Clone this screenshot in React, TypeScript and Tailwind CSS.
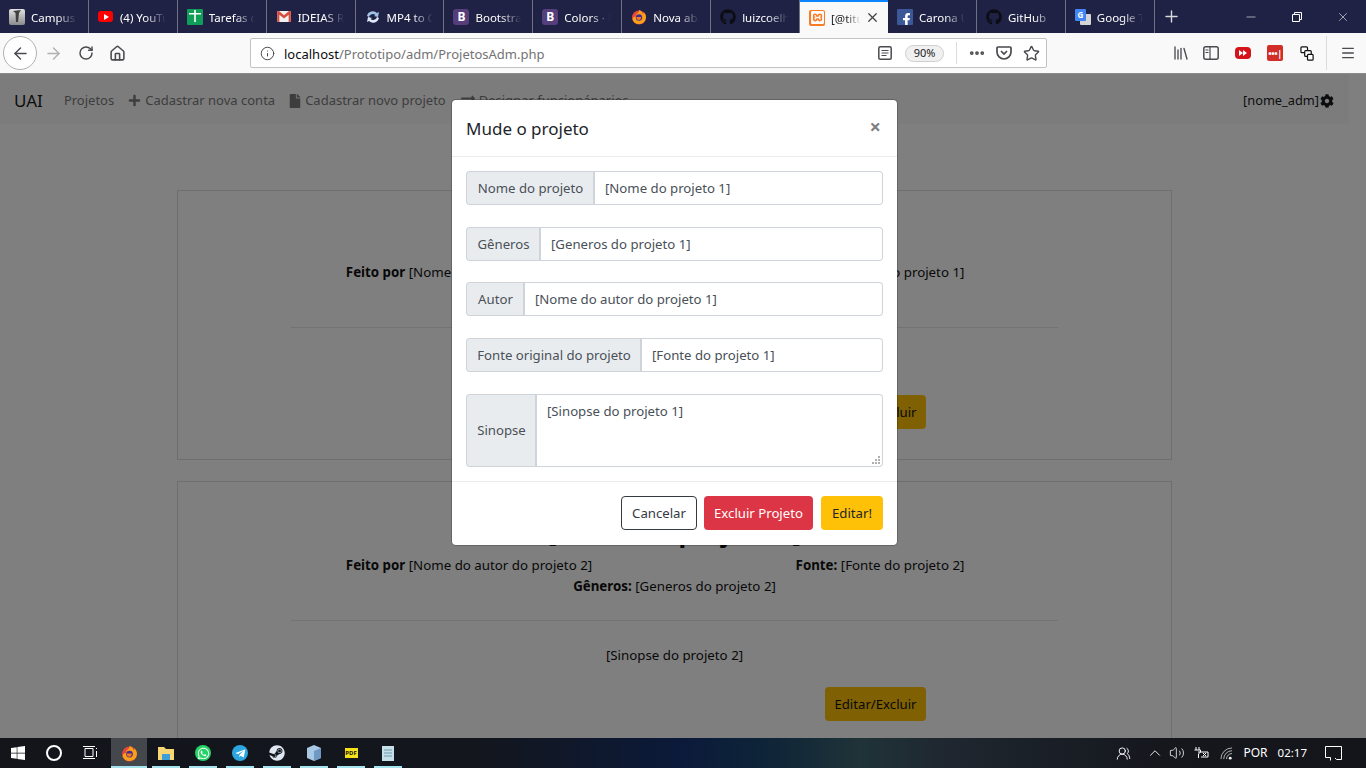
import type { ReactNode } from "react"
import { FaPlus, FaFile, FaExchangeAlt, FaCog, FaGithub, FaWindows, FaSteam, FaWhatsapp, FaTelegramPlane, FaFacebookF } from "react-icons/fa"
import { SiXampp } from "react-icons/si"
import { ArrowLeft, ArrowRight, RotateCw, Home, Info, Ellipsis, Star, Plus, X, Minus, Menu, ChevronUp, Volume2, Library, UsersRound } from "lucide-react"

const font = "font-['Noto_Sans','Open_Sans',sans-serif]"

function Firefox({ size = 16 }: { size?: number }) {
  return (
    <svg width={size} height={size} viewBox="0 0 16 16">
      <circle cx="8" cy="8.5" r="7" fill="#e8463a" />
      <path d="M1.500 10.500A7 7 0 0 0 15 8.500c0-2-.8-4-2.400-5.400.3 1-.1 1.700-.6 2.100C11.500 3 9.800 1.500 8 1c.3 1.500-.6 2.500-1.500 3.200C5 5 4.500 6 5 7.500 3.500 7.500 2 8 1.500 10.500z" fill="#f9a01b" />
      <circle cx="8" cy="8.500" r="3.200" fill="#4a2a8c" />
      <path d="M5.500 8h4.500c.5 1.500-.5 3-2.200 3S5 9.500 5.500 8z" fill="#f47a20" />
    </svg>
  )
}

function TabIcon({ kind }: { kind: string }) {
  if (kind === "campus") return <span className="w-4 h-4 rounded-[2px] bg-gradient-to-b from-[#e2e2e2] to-[#8b8b8b] flex items-start justify-center"><svg width="10" height="13" viewBox="0 0 10 13"><path d="M1 2l8-1-2 3-1 9H4L3.500 4z" fill="#3f3f3f" /></svg></span>
  if (kind === "youtube") return <span className="w-[15px] h-[11px] rounded-[3px] bg-[#f00] flex items-center justify-center"><svg width="6" height="6" viewBox="0 0 6 6"><path d="M1 0l5 3-5 3z" fill="#fff" /></svg></span>
  if (kind === "tasks") return <span className="w-4 h-4 rounded-[1px] bg-[#0f9d58] flex items-center justify-center"><svg width="12" height="14" viewBox="0 0 12 14"><path d="M0 3h12v1.500H0zM5.200 0h1.600v12H5.200z" fill="#fff" /></svg></span>
  if (kind === "gmail") return <svg width="14" height="11" viewBox="0 0 16 13"><rect width="16" height="13" fill="#f1f1f1" /><path d="M0 0h2l6 5 6-5h2v13h-2.500V4.500L8 9 2.500 4.500V13H0z" fill="#d54c3f" /></svg>
  if (kind === "mp4") return <svg width="16" height="16" viewBox="0 0 16 16" fill="none"><path d="M2 7a6 6 0 0 1 10-3l2-1-1 5-4-1 1.500-1A4 4 0 0 0 4 8z" fill="#9fc3e8" /><path d="M14 9a6 6 0 0 1-10 3l-2 1 1-5 4 1-1.500 1A4 4 0 0 0 12 8z" fill="#dbe8f5" /></svg>
  if (kind === "bootstrap") return <span className={`w-4 h-4 rounded-[3px] bg-[#563d7c] text-white flex items-center justify-center text-[12px] font-bold ${font}`}>B</span>
  if (kind === "firefox") return <Firefox />
  if (kind === "github") return <FaGithub className="text-[#0c0d14]" size={16} />
  if (kind === "xampp") return <span className="w-4 h-4 rounded-[2px] bg-[#fb7a24] flex items-center justify-center"><SiXampp className="text-white" size={13} /></span>
  if (kind === "facebook") return <span className="w-4 h-4 rounded-[1px] bg-[#3b5998] flex items-end justify-end overflow-hidden"><FaFacebookF className="text-white -mb-[1px]" size={13} /></span>
  return (
    <span className="relative w-4 h-4">
      <span className="absolute right-0 bottom-0 w-[11px] h-[11px] bg-[#d5d5d5] rounded-[1px]"></span>
      <span className={`absolute left-0 top-0 w-[11px] h-[12px] bg-[#4285f4] rounded-[1px] text-white text-[8px] leading-[12px] text-center font-bold ${font}`}>G</span>
    </span>
  )
}

const tabs = [
  { kind: "campus", label: "Campus" },
  { kind: "youtube", label: "(4) YouTube" },
  { kind: "tasks", label: "Tarefas do" },
  { kind: "gmail", label: "IDEIAS RA" },
  { kind: "mp4", label: "MP4 to GIF" },
  { kind: "bootstrap", label: "Bootstrap" },
  { kind: "bootstrap", label: "Colors · Bo" },
  { kind: "firefox", label: "Nova aba" },
  { kind: "github", label: "luizcoelho" },
  { kind: "xampp", label: "[@titulo]", active: true },
  { kind: "facebook", label: "Carona Uai" },
  { kind: "github", label: "GitHub" },
  { kind: "translate", label: "Google Tra" },
]

function Tab({ kind, label, active }: { kind: string; label: string; active?: boolean }) {
  if (active) {
    return (
      <div className="w-[88px] h-[33px] bg-[#f9f9fa] border-t-2 border-[#0a84ff] flex items-center pl-[9px] shrink-0">
        <TabIcon kind={kind} />
        <span className="ml-[6px] pt-[2px] text-[11.500px] text-[#222] w-[30px] overflow-hidden whitespace-nowrap [mask-image:linear-gradient(to_right,black_50%,transparent)]">{label}</span>
        <X size={15} className="ml-[4px] text-[#444]" strokeWidth={2} />
      </div>
    )
  }
  return (
    <div className="w-[88.900px] h-[33px] flex items-center pl-[9px] border-r border-[#6f7184] shrink-0">
      <span className="w-4 flex justify-center shrink-0"><TabIcon kind={kind} /></span>
      <span className="ml-[6px] pt-[3px] text-[11.500px] text-white w-[46px] overflow-hidden whitespace-nowrap [mask-image:linear-gradient(to_right,black_55%,transparent)]">{label}</span>
    </div>
  )
}

function Card({ n, top, btn }: { n: number; top: string; btn: string }) {
  return (
    <div className="w-[995px] mx-auto border border-[#dcdcdc] shrink-0 px-[113px] h-[270px] flex flex-col items-center text-[13.300px] text-[#111]">
      <h4 className={`${top} mb-[8px] text-[25.500px] font-bold leading-[29px] whitespace-nowrap`}>[Nome do projeto {n}]</h4>
      <div className="w-[822px] grid grid-cols-2 text-center leading-[21px]">
        <p><b>Feito por</b> [Nome do autor do projeto {n}]</p>
        <p><b>Fonte:</b> [Fonte do projeto {n}]</p>
      </div>
      <p className="leading-[21px]"><b>Gêneros:</b> [Generos do projeto {n}]</p>
      <div className="w-full border-t border-[#e6e6e6] mt-[23px]"></div>
      <p className="mt-[24px] leading-[21px]">[Sinopse do projeto {n}]</p>
      <div className={`w-full flex justify-end pr-[132px] ${btn}`}><span className="w-[101px] h-[34px] pt-[2px] bg-[#ffc107] rounded-[4px] flex items-center justify-center text-[13.200px]">Editar/Excluir</span></div>
    </div>
  )
}

function Field({ label, value, labelW }: { label: string; value: string; labelW: string }) {
  return (
    <div className="flex h-[34px] text-[13.200px] text-[#495057]">
      <span className={`${labelW} bg-[#e9ecef] border border-r-0 border-[#ced4da] rounded-l-[4px] flex items-center justify-center pl-[1px] pt-[2px] whitespace-nowrap`}>{label}</span>
      <span className="flex-1 border-2 border-y-[1px] border-r-[1px] border-[#ced4da] rounded-r-[4px] flex items-center pl-[10px] pt-[2px] whitespace-nowrap">{value}</span>
    </div>
  )
}

export default function App() {
  return (
    <div className={`relative w-[1366px] h-[768px] overflow-hidden flex flex-col bg-white ${font}`}>
      {/* barra de abas */}
      <div className="h-[33px] bg-[#1f2245] flex shrink-0">
        {tabs.map((t, i) => <Tab key={i} {...t} />)}
        <div className="w-[34px] flex items-center justify-center"><Plus size={19} className="text-[#d7d8de]" strokeWidth={1.800} /></div>
        <div className="flex-1 flex justify-end text-white">
          <span className="w-[46px] flex items-center justify-center"><Minus size={14} strokeWidth={1} /></span>
          <span className="w-[46px] flex items-center justify-center">
            <svg width="10" height="10" viewBox="0 0 10 10" fill="none" stroke="#fff"><path d="M.5 2.500h7v7h-7zM2.500 2.500v-2h7v7h-2" /></svg>
          </span>
          <span className="w-[46px] flex items-center justify-center"><X size={14} strokeWidth={1} /></span>
        </div>
      </div>

      {/* toolbar */}
      <div className="h-[41px] bg-[#f9f9fa] border-b border-[#8c8c8c] flex items-center shrink-0 text-[#4a4a4f]">
        <div className="ml-[3px] w-[34px] h-[34px] rounded-full border border-[#b1b1b3] bg-white flex items-center justify-center"><ArrowLeft size={19} strokeWidth={1.800} /></div>
        <ArrowRight size={19} strokeWidth={1.800} className="ml-[7px] text-[#b1b1b3]" />
        <RotateCw size={16} strokeWidth={2.200} className="ml-[15px]" />
        <Home size={17} strokeWidth={2.200} className="ml-[15px]" />
        <div className="ml-[124px] w-[797px] h-[30px] bg-white border border-[#c2c2c4] rounded-[2px] flex items-center">
          <Info size={15} className="ml-[9px] shrink-0" strokeWidth={1.600} />
          <span className="ml-[9px] pt-[4px] text-[13px] whitespace-nowrap text-[#737373]"><span className="text-[#0c0c0d]">localhost</span>/Prototipo/adm/ProjetosAdm.php</span>
          <svg width="14" height="14" viewBox="0 0 14 14" fill="none" stroke="#4a4a4f" strokeWidth="1.500" className="ml-auto shrink-0"><rect x=".8" y=".8" width="12.400" height="12.400" rx="1.500" /><path d="M3.500 4.500h7M3.500 7h7M3.500 9.500h5" strokeWidth="1" /></svg>
          <span className="ml-[13px] w-[39px] h-[17px] rounded-full border border-[#cfcfd1] bg-[#f0f0f1] text-[11px] flex items-center justify-center shrink-0 text-[#222]">90%</span>
          <span className="ml-[12px] h-[22px] border-l border-[#dcdcde]"></span>
          <Ellipsis size={18} strokeWidth={3} className="ml-[11px] shrink-0" />
          <svg width="16" height="16" viewBox="0 0 16 16" fill="none" stroke="#4a4a4f" strokeWidth="1.700" className="ml-[10px] shrink-0"><path d="M2 2h12a1 1 0 0 1 1 1v4a7 7 0 0 1-14 0V3a1 1 0 0 1 1-1z" /><path d="M5 6l3 3 3-3" /></svg>
          <Star size={17} strokeWidth={2} className="ml-[11px] mr-[6px] shrink-0" />
        </div>
        <Library size={18} strokeWidth={1.800} className="ml-[125px]" />
        <svg width="16" height="14" viewBox="0 0 16 14" fill="none" stroke="#4a4a4f" strokeWidth="1.500" className="ml-[13px]"><rect x=".8" y=".8" width="14.400" height="12.400" rx="2" /><path d="M7 1v12M2.500 4h3M2.500 6.500h3" strokeWidth="1.200" /></svg>
        <span className="ml-[16px] w-4 h-[12px] rounded-[4px] bg-[#d4131b] flex items-center justify-center"><svg width="8" height="6" viewBox="0 0 8 6"><path d="M0 0l4 3-4 3zM4 0l4 3-4 3z" fill="#fff" /></svg></span>
        <span className="ml-[16px] w-4 h-4 rounded-[2px] bg-[#d32d27] flex items-center justify-center text-white text-[9px] leading-none font-bold tracking-tighter">•••|</span>
        <svg width="15" height="15" viewBox="0 0 16 16" fill="#fff" stroke="#111" strokeWidth="1.300" className="ml-[17px]"><rect x="1" y="1" width="7" height="6" rx="1" /><rect x="5" y="5" width="7" height="6" rx="1" /><rect x="8" y="9" width="6" height="6" rx="1" /></svg>
        <span className="ml-[11px] h-[34px] border-l border-[#dcdcde]"></span>
        <Menu size={16} strokeWidth={2} className="ml-[13px]" />
      </div>

      {/* pagina, a barra de rolagem fica de fora com o modal aberto */}
      <div className="flex-1 min-h-0 overflow-hidden w-[1349px] flex flex-col bg-white">
        <nav className="h-[50px] bg-[#f8f9fa] flex items-center pl-[14px] pr-[15px] shrink-0 text-[13px] text-[#7b7b7b]">
          <span className="text-[17px] pt-[3px] text-[#1a1a1a] mr-[21px]">UAI</span>
          <span className="pt-[3px]">Projetos</span>
          <span className="ml-[14px] pt-[3px] flex items-center gap-[4px]"><FaPlus size={13} />Cadastrar nova conta</span>
          <span className="ml-[13px] pt-[3px] flex items-center gap-[3px]"><FaFile size={14} />Cadastrar novo projeto</span>
          <span className="ml-[15px] pt-[3px] flex items-center gap-[4px]"><FaExchangeAlt size={14} />Designar funcionáparios</span>
          <span className="ml-auto pt-[3px] flex items-center gap-[1px] text-[12.800px] text-[#1a1a1a]">[nome_adm]<FaCog size={14} /></span>
        </nav>
        <div className="mt-[66px] flex flex-col gap-[21px]">
          <Card n={1} top="mt-[33.500px]" btn="mt-[22px]" />
          <Card n={2} top="mt-[35.500px]" btn="mt-[21px]" />
        </div>
      </div>

      {/* fundo escuro do modal */}
      <div className="absolute left-0 right-0 top-[74px] bottom-[30px] bg-black/50"></div>

      {/* modal */}
      <div className="absolute left-[452px] top-[100px] w-[445px] h-[445px] bg-white rounded-[4px] shadow-[0_0_0_1px_rgba(0,0,0,0.2)] flex flex-col">
        <div className="h-[57px] border-b border-[#e9ecef] flex items-center justify-between pl-[14px] pr-[16px] pt-[2px] shrink-0">
          <h5 className="text-[17px] text-[#212529]">Mude o projeto</h5>
          <span className="text-[20px] font-bold text-[#7f7f7f] leading-none -mt-[4px]">×</span>
        </div>
        <div className="flex-1 px-[14px] pt-[14px] flex flex-col gap-[21.700px]">
          <Field label="Nome do projeto" value="[Nome do projeto 1]" labelW="w-[127px]" />
          <Field label="Gêneros" value="[Generos do projeto 1]" labelW="w-[73px]" />
          <Field label="Autor" value="[Nome do autor do projeto 1]" labelW="w-[57px]" />
          <Field label="Fonte original do projeto" value="[Fonte do projeto 1]" labelW="w-[174px]" />
          <div className="flex h-[73px] text-[13.200px] text-[#495057]">
            <span className="w-[69px] bg-[#e9ecef] border border-r-0 border-[#ced4da] rounded-l-[4px] flex items-center justify-center pl-[1px] pt-[2px]">Sinopse</span>
            <span className="relative flex-1 border-2 border-y-[1px] border-r-[1px] border-[#ced4da] rounded-r-[4px] pl-[10px] pt-[7px]">
              [Sinopse do projeto 1]
              <svg width="8" height="8" viewBox="0 0 8 8" fill="#b0b0b0" className="absolute right-[2px] bottom-[2px]"><path d="M6 0h2v2H6zM3 3h2v2H3zM6 3h2v2H6zM0 6h2v2H0zM3 6h2v2H3zM6 6h2v2H6z" /></svg>
            </span>
          </div>
        </div>
        <div className="h-[64px] border-t border-[#e9ecef] flex items-start pt-[14px] justify-end pr-[14px] gap-[7px] text-[13.200px] shrink-0">
          <span className="w-[76px] h-[34px] pt-[2px] rounded-[4px] border border-[#343a40] text-[#343a40] flex items-center justify-center">Cancelar</span>
          <span className="w-[109px] h-[34px] pt-[2px] rounded-[4px] bg-[#dc3545] text-white flex items-center justify-center">Excluir Projeto</span>
          <span className="ml-[1px] w-[62px] h-[34px] pt-[2px] rounded-[4px] bg-[#ffc107] text-[#212529] flex items-center justify-center">Editar!</span>
        </div>
      </div>

      {/* barra de tarefas */}
      <div className="relative z-10 h-[30px] shrink-0 bg-[linear-gradient(to_right,#13151b_0%,#13161d_35%,#0b1a3a_50%,#0e2438_56%,#1f3338_63%,#1f2730_69%,#15171d_85%,#13151b_100%)] flex items-center text-white">
        <FaWindows size={16} className="ml-[10px]" />
        <span className="ml-[20px] w-[16px] h-[16px] rounded-full border-2 border-white"></span>
        <svg width="16" height="14" viewBox="0 0 16 14" fill="none" stroke="#fff" className="ml-[20px]"><path d="M3 2.500h8v8H3zM1 .500h12M1 12.500h12M14.500 2v1M14.500 5v6" /></svg>
        <div className="ml-[13px] flex items-center gap-[1px] h-full">
          <TaskIcon active><Firefox size={17} /></TaskIcon>
          <TaskIcon><svg width="16" height="14" viewBox="0 0 16 14"><path d="M0 1h6l2 2h8v11H0z" fill="#f7d774" /><path d="M4 8h8v6H4z" fill="#3c9fdb" /></svg></TaskIcon>
          <TaskIcon><span className="w-4 h-4 rounded-full bg-[#25d366] flex items-center justify-center"><FaWhatsapp size={13} /></span></TaskIcon>
          <TaskIcon><span className="w-4 h-4 rounded-full bg-[#2ca5e0] flex items-center justify-center"><FaTelegramPlane size={11} /></span></TaskIcon>
          <TaskIcon><FaSteam size={16} className="text-[#dfe8f2]" /></TaskIcon>
          <TaskIcon><svg width="14" height="16" viewBox="0 0 14 16"><path d="M7 0l7 3v10l-7 3-7-3V3z" fill="#a9c8e6" /><path d="M7 6v10l7-3V3z" fill="#6f98c2" /></svg></TaskIcon>
          <TaskIcon><span className="w-[13px] h-[10px] bg-[#f5e11b] text-[#111] text-[6px] leading-[10px] font-bold text-center">PDF</span></TaskIcon>
          <TaskIcon><svg width="14" height="16" viewBox="0 0 14 16"><path d="M1 1h12v15H1z" fill="#c6dfe8" /><path d="M3 5h8M3 8h8M3 11h8" stroke="#6c9aaf" /></svg></TaskIcon>
        </div>
        <div className="ml-auto flex items-center">
          <UsersRound size={15} strokeWidth={1.500} />
          <ChevronUp size={18} strokeWidth={1.200} className="ml-[15px]" />
          <Volume2 size={16} strokeWidth={1.200} className="ml-[5px]" />
          <svg width="17" height="14" viewBox="0 0 17 14" fill="none" stroke="#fff" className="ml-[8px]"><path d="M3 1v3M6 1v3M1.500 4h6v2l-2 2v4M5 6h10v5H8M10 7l3 3M13 7l-3 3" /></svg>
          <svg width="13" height="13" viewBox="0 0 14 14" fill="none" stroke="#fff" className="ml-[10px]"><path d="M1 13A12 12 0 0 1 13 1M4 13a9 9 0 0 1 9-9M7 13a6 6 0 0 1 6-6" opacity=".7" /><circle cx="11" cy="12" r="1.500" fill="#fff" stroke="none" /></svg>
          <span className="ml-[10px] text-[12px]">POR</span>
          <span className="ml-[10px] text-[11.500px]">02:17</span>
          <svg width="17" height="15" viewBox="0 0 17 15" fill="none" stroke="#fff" className="ml-[18px] mr-[24px]"><path d="M.500.500h16v13h-5l-1.500-1.500M.500.500v11h5v3" /></svg>
        </div>
      </div>
    </div>
  )
}

function TaskIcon({ children, active }: { children: ReactNode; active?: boolean }) {
  return (
    <span className={`relative w-[36px] h-full flex items-center justify-center ${active ? "bg-[#44484d]" : ""}`}>
      {children}
      <span className={`absolute bottom-0 h-[2px] bg-[#a5e4ee] ${active ? "left-0 right-0" : "left-[4px] right-[4px]"}`}></span>
    </span>
  )
}
